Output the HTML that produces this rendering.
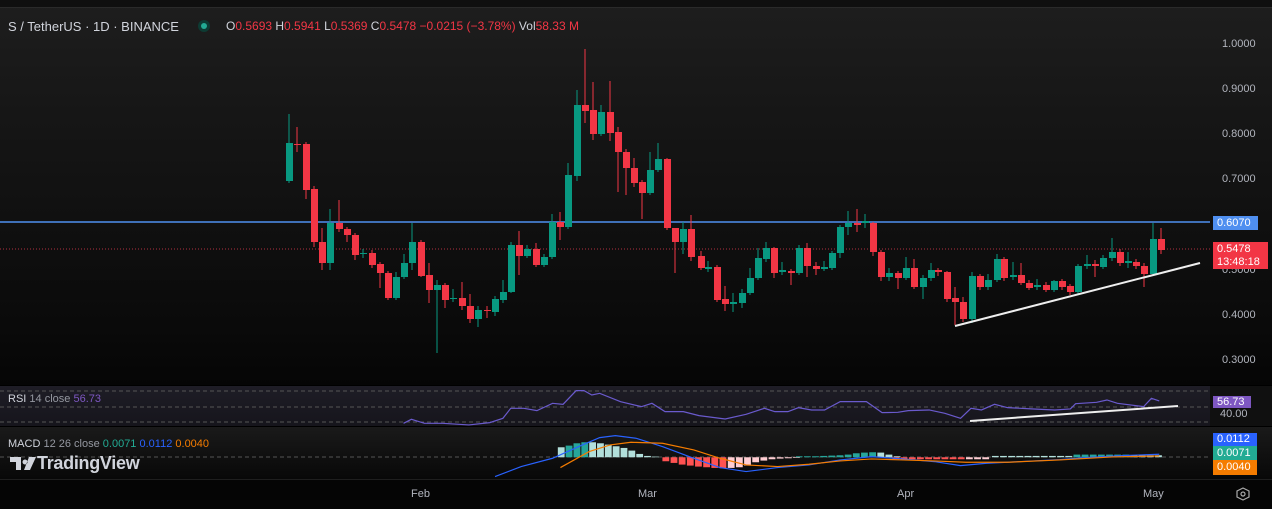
<!DOCTYPE html>
<html><head><meta charset="utf-8"><style>
*{margin:0;padding:0;box-sizing:border-box}
body{width:1272px;height:509px;overflow:hidden;background:#000;font-family:"Liberation Sans",sans-serif;position:relative}
.t{position:absolute;white-space:nowrap}
</style></head><body>
<div style="position:absolute;left:0;top:0;width:1272px;height:385px;background:linear-gradient(#1e1e1e 0%,#161616 30%,#0a0a0a 85%,#050505 100%)"></div>
<div style="position:absolute;left:0;top:0;width:1272px;height:8px;background:#0f0f0f;border-bottom:1px solid #2a2a2a"></div>
<div style="position:absolute;left:0;top:386px;width:1210px;height:40px;background:linear-gradient(#1e1d26,#16151c)"></div>
<div style="position:absolute;left:1210px;top:386px;width:62px;height:40px;background:#101010"></div>
<div style="position:absolute;left:0;top:427px;width:1272px;height:52px;background:linear-gradient(#1a1a1a,#080808)"></div>
<div style="position:absolute;left:0;top:479px;width:1272px;height:30px;background:#050505;border-top:1px solid #1e1e1e"></div>

<svg id="s" width="1272" height="509" style="position:absolute;left:0;top:0">
<line x1="0" y1="222" x2="1210" y2="222" stroke="#4f8ff0" stroke-width="1.5"/>
<line x1="0" y1="249" x2="1210" y2="249" stroke="#b03040" stroke-width="1" stroke-dasharray="1 2"/>
<g stroke="#555" stroke-dasharray="4 3" stroke-width="1">
<line x1="0" y1="391" x2="1210" y2="391"/><line x1="0" y1="407" x2="1210" y2="407"/><line x1="0" y1="422" x2="1210" y2="422"/>
<line x1="0" y1="457" x2="1210" y2="457"/>
</g>
<g id="c"></g>
<line x1="955" y1="326" x2="1200" y2="263" stroke="#eee" stroke-width="2"/>
<g transform="translate(380,385) scale(0.523,0.333)">
<polyline fill="none" stroke="#6a5acd" stroke-width="1.2" vector-effect="non-scaling-stroke" points="45,115 60,103 85,115 120,115 170,120 210,113 235,100 250,70 275,70 300,77 330,55 350,58 375,17 390,17 405,30 420,25 460,50 500,65 520,55 545,80 580,80 610,92 660,102 700,88 735,70 755,80 780,80 800,68 825,75 850,75 880,50 930,50 960,83 990,82 1010,77 1050,75 1080,85 1110,100 1130,70 1150,75 1175,58 1200,68 1250,72 1290,75 1320,72 1330,56 1370,52 1390,45 1410,55 1460,65 1475,40 1490,48"/>
<g id="h"></g>
<polyline fill="none" stroke="#2962ff" stroke-width="1.2" vector-effect="non-scaling-stroke" points="220,275 270,245 330,220 380,185 420,158 450,152 490,160 540,185 600,220 650,248 700,260 760,248 820,240 880,225 940,215 1000,222 1060,230 1110,242 1160,235 1250,228 1300,224 1350,218 1420,212 1490,208"/>
<polyline fill="none" stroke="#f57c00" stroke-width="1.2" vector-effect="non-scaling-stroke" points="345,248 400,200 440,180 480,172 540,175 600,195 650,220 700,240 760,245 820,238 880,228 940,222 1000,225 1060,228 1120,232 1200,232 1300,225 1400,216 1490,213"/>
</g>
<line x1="970" y1="421" x2="1178" y2="406" stroke="#eee" stroke-width="2"/>
<g fill="none" stroke="#aaa" stroke-width="1.2"><polygon points="1243,488 1249,491 1249,497 1243,500 1237,497 1237,491"/><circle cx="1243" cy="494" r="2"/></g>
</svg>

<div class="t" style="left:8px;top:19px;font-size:13px;color:#d1d4dc">S / TetherUS · 1D · BINANCE</div>
<div style="position:absolute;left:198px;top:20px;width:12px;height:12px;border-radius:6px;background:#0d3b33"></div>
<div style="position:absolute;left:201px;top:23px;width:6px;height:6px;border-radius:3px;background:#22ab94"></div>
<div class="t" style="left:226px;top:19px;font-size:12px;color:#d1d4dc">O<span style="color:#f23645">0.5693</span> H<span style="color:#f23645">0.5941</span> L<span style="color:#f23645">0.5369</span> C<span style="color:#f23645">0.5478</span> <span style="color:#f23645">−0.0215 (−3.78%)</span> Vol<span style="color:#f23645">58.33 M</span></div>

<div class="t" style="left:1222px;top:38px;font-size:11px;color:#b2b5be">1.0000</div>
<div class="t" style="left:1222px;top:83px;font-size:11px;color:#b2b5be">0.9000</div>
<div class="t" style="left:1222px;top:128px;font-size:11px;color:#b2b5be">0.8000</div>
<div class="t" style="left:1222px;top:173px;font-size:11px;color:#b2b5be">0.7000</div>
<div class="t" style="left:1222px;top:264px;font-size:11px;color:#b2b5be">0.5000</div>
<div class="t" style="left:1222px;top:309px;font-size:11px;color:#b2b5be">0.4000</div>
<div class="t" style="left:1222px;top:354px;font-size:11px;color:#b2b5be">0.3000</div>
<div class="t" style="left:1213px;top:216px;width:45px;height:14px;background:#4f8ff0;color:#fff;font-size:11px;padding:1px 0 0 4px">0.6070</div>
<div class="t" style="left:1213px;top:242px;width:55px;height:27px;background:#f23645;color:#fff;font-size:11px;padding:1px 0 0 4px;line-height:13px">0.5478<br>13:48:18</div>

<div class="t" style="left:8px;top:393px;font-size:11px;color:#d1d4dc">RSI <span style="color:#9598a1">14 close</span> <span style="color:#7e57c2">56.73</span></div>
<div class="t" style="left:1213px;top:396px;width:38px;height:12px;background:#7e57c2;color:#fff;font-size:11px;padding:0 0 0 4px;line-height:12px">56.73</div>
<div class="t" style="left:1220px;top:408px;font-size:11px;color:#b2b5be">40.00</div>

<div class="t" style="left:8px;top:438px;font-size:11px;color:#d1d4dc">MACD <span style="color:#9598a1">12 26 close</span> <span style="color:#22ab94">0.0071</span> <span style="color:#2962ff">0.0112</span> <span style="color:#f57c00">0.0040</span></div>
<div class="t" style="left:37px;top:453px;font-size:18px;font-weight:bold;color:#d1d4dc;letter-spacing:-0.3px">TradingView</div>
<svg style="position:absolute;left:10px;top:457px" width="28" height="14"><path d="M0 0h11v13h-5v-8h-6z M15 2.5a2.5 2.5 0 1 0 0.01 0z M19 0h7l-6 13h-6z" fill="#d1d4dc"/></svg>
<div class="t" style="left:1213px;top:433px;width:44px;height:13px;background:#2962ff;color:#fff;font-size:11px;padding:0 0 0 4px;line-height:13px">0.0112</div>
<div class="t" style="left:1213px;top:446px;width:44px;height:14px;background:#22ab94;color:#fff;font-size:11px;padding:0 0 0 4px;line-height:14px">0.0071</div>
<div class="t" style="left:1213px;top:460px;width:44px;height:15px;background:#f57c00;color:#fff;font-size:11px;padding:0 0 0 4px;line-height:15px">0.0040</div>

<div class="t" style="left:411px;top:488px;font-size:11px;color:#b2b5be">Feb</div>
<div class="t" style="left:638px;top:488px;font-size:11px;color:#b2b5be">Mar</div>
<div class="t" style="left:897px;top:488px;font-size:11px;color:#b2b5be">Apr</div>
<div class="t" style="left:1143px;top:488px;font-size:11px;color:#b2b5be">May</div>

<script>
var C=[[289,143,181,'g',114,183],[297,144,145,'r',127,152],[306,144,190,'r',142,199],[314,189,242,'r',186,247],[322,242,263,'r',228,270],[330,223,263,'g',209,270],[339,223,229,'r',200,232],[347,229,235,'r',227,242],[355,235,255,'r',233,260],[363,253,254,'g',249,258],[372,253,265,'r',250,268],[380,264,273,'r',262,288],[388,273,298,'r',271,300],[396,277,298,'g',272,300],[404,263,277,'g',254,279],[412,242,263,'g',223,270],[421,242,276,'r',240,277],[429,275,290,'r',263,303],[437,285,290,'g',280,353],[445,285,300,'r',283,308],[453,298,299,'g',289,302],[462,298,306,'r',282,310],[470,306,319,'r',294,323],[478,310,319,'g',306,327],[487,310,311,'r',306,318],[495,299,312,'g',296,316],[503,292,300,'g',280,303],[511,245,292,'g',242,293],[519,245,256,'r',231,275],[527,249,256,'g',245,258],[536,249,265,'r',243,267],[544,257,265,'g',254,267],[552,222,257,'g',214,259],[560,222,227,'r',212,240],[568,175,227,'g',163,229],[577,105,176,'g',90,181],[585,105,111,'r',49,123],[593,110,134,'r',82,140],[601,112,134,'g',105,136],[610,112,133,'r',81,141],[618,132,152,'r',127,192],[626,152,168,'r',149,195],[634,168,183,'r',158,187],[642,182,193,'r',180,219],[650,170,193,'g',152,195],[658,159,170,'g',143,172],[667,159,228,'r',158,230],[675,228,242,'r',228,273],[683,229,242,'g',222,254],[691,229,257,'r',215,261],[701,256,268,'r',251,270],[708,267,269,'g',261,272],[717,267,300,'r',265,302],[725,299,304,'r',286,311],[733,302,304,'g',293,312],[742,293,303,'g',289,308],[750,278,293,'g',268,295],[758,258,278,'g',248,280],[766,248,259,'g',242,262],[774,248,273,'r',247,278],[782,270,272,'g',262,275],[791,271,273,'r',269,285],[799,248,273,'g',245,275],[807,248,266,'r',243,277],[816,266,269,'r',262,275],[824,267,269,'g',261,271],[832,253,268,'g',251,270],[840,227,253,'g',225,258],[848,223,227,'g',211,235],[857,223,225,'r',209,232],[865,221,223,'g',214,228],[873,223,252,'r',222,256],[881,252,277,'r',250,281],[889,273,277,'g',268,281],[898,273,278,'r',271,289],[906,268,278,'g',257,280],[914,268,287,'r',259,289],[923,278,287,'g',275,299],[931,270,278,'g',263,281],[938,270,272,'r',268,276],[947,272,299,'r',271,302],[955,298,302,'r',287,325],[963,302,319,'r',297,322],[972,276,319,'g',272,323],[980,276,287,'r',274,290],[988,280,287,'g',274,290],[997,259,280,'g',254,282],[1004,259,278,'r',257,281],[1013,275,277,'g',262,280],[1021,275,283,'r',263,285],[1029,283,288,'r',280,290],[1037,285,287,'g',279,290],[1046,285,290,'r',282,292],[1054,281,290,'g',280,292],[1062,281,287,'r',279,290],[1070,286,292,'r',284,295],[1078,266,292,'g',264,294],[1087,264,266,'g',255,269],[1095,264,266,'r',260,277],[1103,258,267,'g',255,269],[1112,252,258,'g',238,261],[1120,252,263,'r',249,266],[1128,261,263,'g',252,268],[1136,262,266,'r',259,269],[1144,266,274,'r',263,287],[1153,239,274,'g',223,276],[1161,239,250,'r',228,254]];
var s='';C.forEach(function(a){var col=a[3]=='g'?'#089981':'#f23645';s+='<line x1="'+a[0]+'" y1="'+a[4]+'" x2="'+a[0]+'" y2="'+a[5]+'" stroke="'+col+'" stroke-width="1"/><rect x="'+(a[0]-3)+'" y="'+a[1]+'" width="7" height="'+Math.max(1,a[2]-a[1])+'" fill="'+col+'"/>';});
document.getElementById('c').innerHTML=s;
var H=[[340,-30,'#b2dfdb'],[355,-35,'#26a69a'],[370,-42,'#26a69a'],[385,-45,'#26a69a'],[400,-45,'#b2dfdb'],[415,-42,'#b2dfdb'],[430,-38,'#b2dfdb'],[445,-33,'#b2dfdb'],[460,-28,'#b2dfdb'],[475,-20,'#b2dfdb'],[490,-10,'#b2dfdb'],[505,-4,'#b2dfdb'],[520,-2,'#b2dfdb']];
var neg=[12,17,22,25,28,30,32,33];neg.forEach(function(v,i){H.push([540+i*15.6,v,'#ff5252'])});
[32,30,25,15,10,6,4,3,2].forEach(function(v,i){H.push([665+i*15.6,v,'#ffcdd2'])});
[3,3,3,4,5,6,8,12,14,15,14,8,3].forEach(function(v,i){H.push([795+i*15.6,-v,i<10?'#26a69a':'#b2dfdb'])});
for(var x=980;x<1160;x+=15.6)H.push([x,6,x<1120?'#ff5252':'#ffcdd2']);
for(var x=1170;x<1495;x+=15.6)H.push([x,-(x<1320?4:x<1430?8:6),(x>1320&&x<1420)?'#26a69a':'#b2dfdb']);
var h='';H.forEach(function(b){var y=b[1]<0?217+b[1]:217;h+='<rect x="'+b[0]+'" y="'+y+'" width="13" height="'+Math.abs(b[1])+'" fill="'+b[2]+'"/>';});
document.getElementById('h').innerHTML=h;
</script>
</body></html>
